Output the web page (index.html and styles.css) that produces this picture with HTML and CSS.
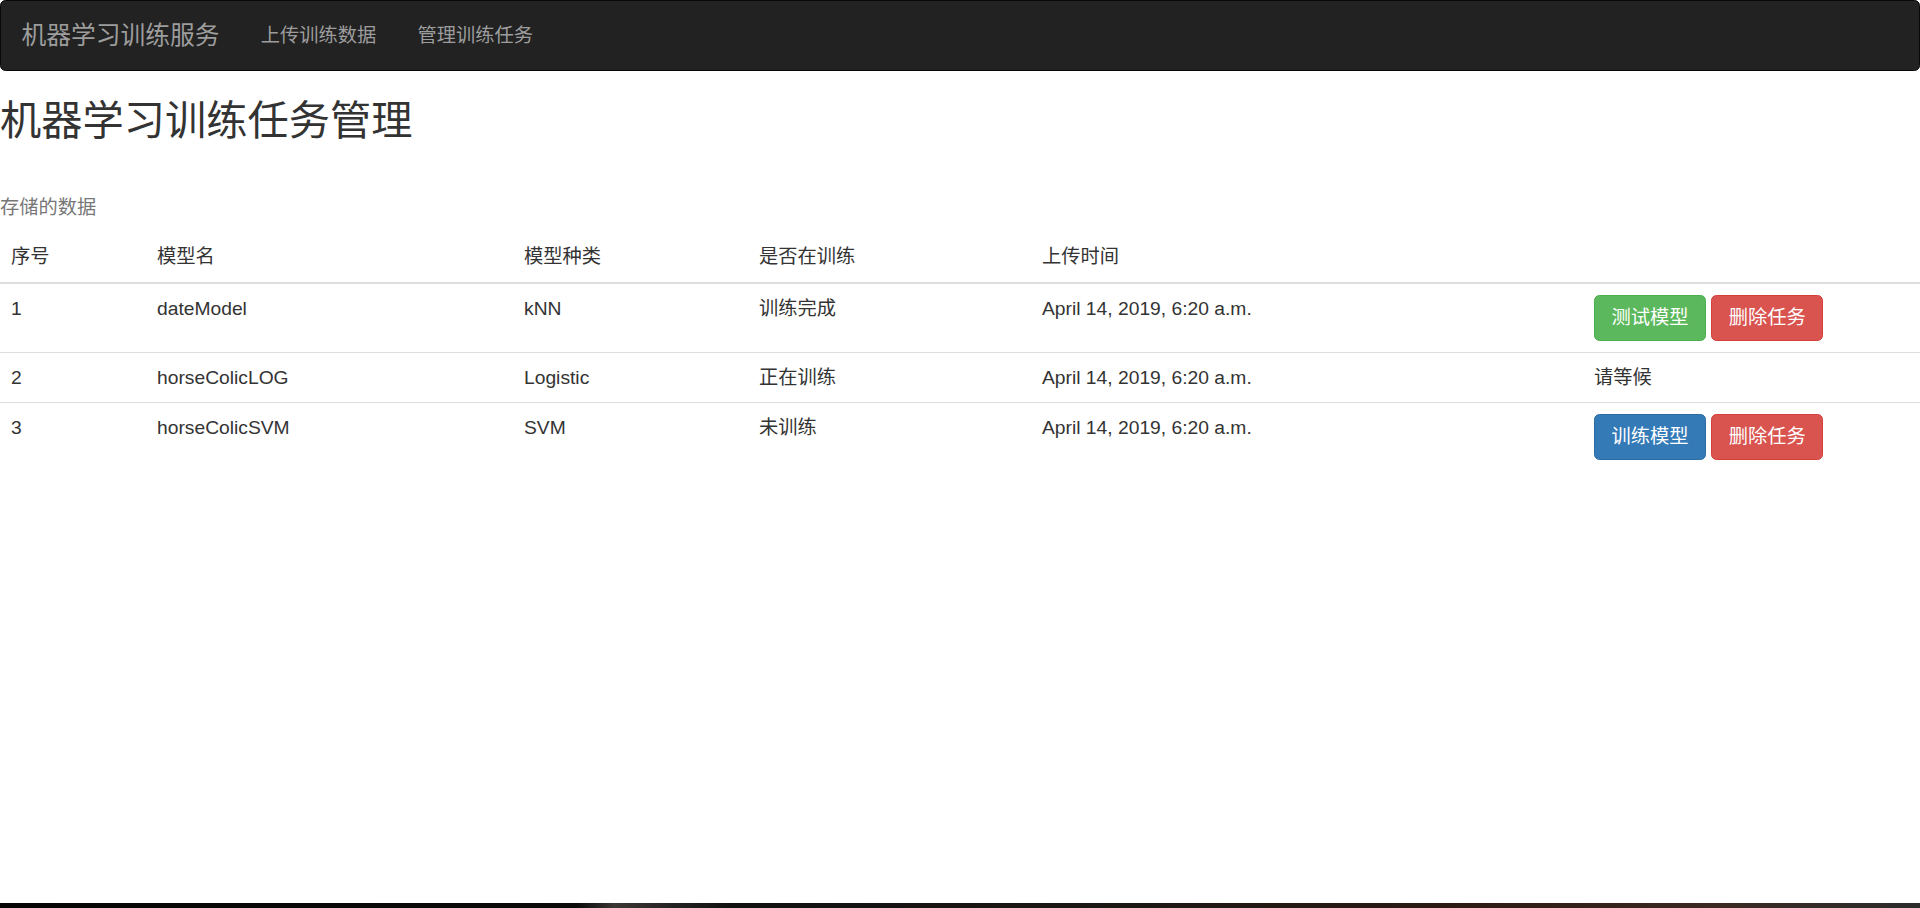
FILE: index.html
```html
<!DOCTYPE html>
<html lang="zh-CN">
<head>
<meta charset="utf-8">
<title>机器学习训练任务管理</title>
<link rel="stylesheet" href="styles.css">
</head>
<body>
<div class="page">
  <main class="main">
    <nav class="navbar">
      <a class="brand" href="#">机器学习训练服务</a>
      <a class="nav-link" href="#">上传训练数据</a>
      <a class="nav-link" href="#">管理训练任务</a>
    </nav>
    <h2 class="title">机器学习训练任务管理</h2>
    <table class="table">
      <caption class="caption">存储的数据</caption>
      <thead>
        <tr>
          <th class="c1">序号</th>
          <th class="c2">模型名</th>
          <th class="c3">模型种类</th>
          <th class="c4">是否在训练</th>
          <th class="c5">上传时间</th>
          <th class="c6"></th>
        </tr>
      </thead>
      <tbody>
        <tr>
          <td>1</td>
          <td>dateModel</td>
          <td>kNN</td>
          <td>训练完成</td>
          <td>April 14, 2019, 6:20 a.m.</td>
          <td class="actions"><button class="btn btn-success">测试模型</button> <button class="btn btn-danger">删除任务</button></td>
        </tr>
        <tr>
          <td>2</td>
          <td>horseColicLOG</td>
          <td>Logistic</td>
          <td>正在训练</td>
          <td>April 14, 2019, 6:20 a.m.</td>
          <td class="actions">请等候</td>
        </tr>
        <tr>
          <td>3</td>
          <td>horseColicSVM</td>
          <td>SVM</td>
          <td>未训练</td>
          <td>April 14, 2019, 6:20 a.m.</td>
          <td class="actions"><button class="btn btn-primary">训练模型</button> <button class="btn btn-danger">删除任务</button></td>
        </tr>
      </tbody>
    </table>
  </main>
  <div class="desktop-strip"></div>
</div>
</body>
</html>
```
FILE: styles.css
```css
html, body {
  margin: 0;
  padding: 0;
  height: 100%;
}
body {
  font-family: "Liberation Sans", "Noto Sans CJK SC", sans-serif;
  font-size: 19.25px;
  line-height: 27.5px;
  color: #333;
  background: #fff;
}
.page {
  display: flex;
  flex-direction: column;
  height: 100%;
}
.main {
  flex: 1;
  min-height: 0;
}
.navbar {
  display: flex;
  align-items: center;
  min-height: 69px;
  background: #222;
  border: 1px solid #080808;
  border-radius: 5.5px;
  margin-bottom: 27.5px;
  box-sizing: content-box;
}
.brand {
  font-size: 24.75px;
  line-height: 27.5px;
  padding: 0 20.6px;
  color: #9d9d9d;
  text-decoration: none;
}
.nav-link {
  padding: 0 20.6px;
  color: #9d9d9d;
  text-decoration: none;
}
.title {
  font-size: 41.25px;
  line-height: 1.1;
  font-weight: 400;
  margin: 27.5px 0 38.75px;
}
.table {
  width: 100%;
  border-collapse: collapse;
  border-spacing: 0;
  table-layout: fixed;
}
.caption {
  caption-side: top;
  text-align: left;
  color: #777;
  padding: 11px 0;
}
.table th, .table td {
  box-sizing: border-box;
  padding: 11px;
  text-align: left;
  vertical-align: top;
  font-weight: normal;
}
.table thead th {
  vertical-align: bottom;
  border-bottom: 2px solid #ddd;
}
.table tbody td {
  border-top: 1px solid #ddd;
}
.actions {
  white-space: nowrap;
}
.c1 { width: 146px; }
.c2 { width: 367px; }
.c3 { width: 235px; }
.c4 { width: 283px; }
.c5 { width: 552px; }
.c6 { width: 337px; }
.btn {
  display: inline-block;
  font-family: inherit;
  font-size: 19.25px;
  line-height: 27.5px;
  padding: 8.25px 16.5px;
  border: 1px solid transparent;
  border-radius: 5.5px;
  color: #fff;
  cursor: pointer;
  vertical-align: middle;
  margin: 0;
}
.btn-success { background: #5cb85c; border-color: #4cae4c; }
.btn-danger { background: #d9534f; border-color: #d43f3a; }
.btn-primary { background: #337ab7; border-color: #2e6da4; }
.desktop-strip {
  height: 5px;
  flex: none;
  background: linear-gradient(90deg, #050505 0%, #0a0a0a 30%, #3a3634 32%, #111 38%, #1e1814 60%, #2a1a12 75%, #3a2a22 90%, #2c2c2c 100%);
}
```
